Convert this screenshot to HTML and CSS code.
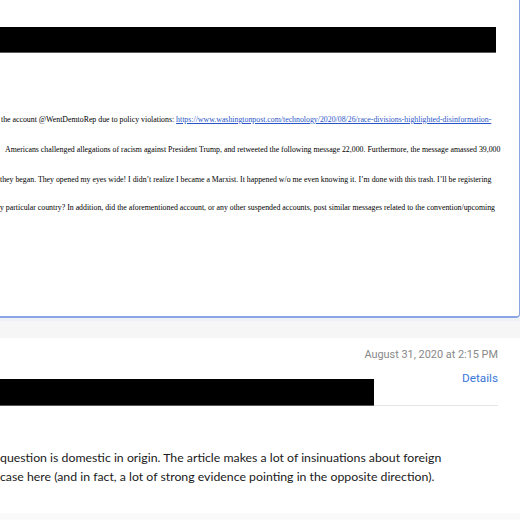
FILE: index.html
```html
<!DOCTYPE html>
<html>
<head>
<meta charset="utf-8">
<link rel="stylesheet" href="styles.css">
</head>
<body>
<div class="top-card">
  <div class="redact-top"></div>
  <div class="doc">
    <p class="line l1">the account @WentDemtoRep due to policy violations: <a href="#">https://www.washingtonpost.com/technology/2020/08/26/race-divisions-highlighted-disinformation-</a></p>
    <p class="line l2">Americans challenged allegations of racism against President Trump, and retweeted the following message 22,000. Furthermore, the message amassed 39,000</p>
    <p class="line l3">they began. They opened my eyes wide! I didn’t realize I became a Marxist. It happened w/o me even knowing it. I’m done with this trash. I’ll be registering</p>
    <p class="line l4">y particular country? In addition, did the aforementioned account, or any other suspended accounts, post similar messages related to the convention/upcoming</p>
  </div>
</div>
<div class="band"></div>
<div class="mail">
  <div class="mail-head">
    <div class="meta">
      <div class="date">August 31, 2020 at 2:15 PM</div>
    </div>
    <div class="row">
      <div class="redact-bottom"></div>
      <div class="row-right">
        <a class="details" href="#">Details</a>
        <div class="sep"></div>
      </div>
    </div>
  </div>
  <div class="body">
    <p>question is domestic in origin. The article makes a lot of insinuations about foreign<br>case here (and in fact, a lot of strong evidence pointing in the opposite direction).</p>
  </div>
</div>
<div class="foot"></div>
</body>
</html>
```
FILE: styles.css
```css
html, body {
  margin: 0;
  padding: 0;
  background: #ffffff;
  width: 520px;
  height: 520px;
  overflow: hidden;
}
.top-card {
  box-sizing: border-box;
  width: 520px;
  height: 318px;
  padding-top: 27px;
  background: #fff;
  border-right: 1px solid #8aa4e4;
  border-bottom: 2px solid #8aa4e4;
  border-bottom-right-radius: 4px;
}
.redact-top {
  width: 496px;
  height: 25px;
  background: #000;
  border-bottom: 1px solid #5a5a5a;
}
.doc {
  padding-top: 62px;
  font-family: "Liberation Serif", serif;
  font-size: 7.83px;
  color: #000;
}
.line {
  margin: 0;
  height: 30px;
  line-height: 10px;
  white-space: nowrap;
}
.l1 { padding-left: 1px; }
.l2 { padding-left: 5px; }
.l3 { padding-left: 0; height: 28px; }
.l4 { padding-left: 0; }
.doc a {
  color: #2a55c8;
  text-decoration: underline;
}
.band {
  height: 20px;
  background: #f6f6f6;
  border-top: 3px solid #eef1f6;
  box-sizing: border-box;
}
.mail {
  background: #fff;
  height: 175px;
  font-family: "Roboto", "Liberation Sans", Arial, sans-serif;
}
.mail-head {
  padding-top: 9px;
  padding-right: 22px;
}
.meta {
  display: flex;
  justify-content: flex-end;
}
.date {
  font-size: 10.9px;
  color: #888888;
  line-height: 16px;
}
.row {
  display: flex;
  align-items: stretch;
  margin-top: 16px;
}
.redact-bottom {
  width: 374px;
  height: 26px;
  background: #000;
  border-bottom: 1px solid #555;
  flex: none;
}
.row-right {
  flex: 1;
  display: flex;
  flex-direction: column;
  align-items: flex-end;
  justify-content: space-between;
}
.details {
  font-size: 11.8px;
  color: #3b76d8;
  text-decoration: none;
  line-height: 16px;
  margin-top: -9px;
}
.sep {
  align-self: stretch;
  height: 1px;
  background: #e4e4e4;
}
.body {
  padding-top: 42px;
  font-family: "Lato", "Noto Sans", sans-serif;
  font-size: 12.3px;
  line-height: 19px;
  color: #1a1a1a;
}
.body p {
  margin: 0;
  white-space: nowrap;
}
.foot {
  height: 7px;
  background: #fafafa;
}
```
